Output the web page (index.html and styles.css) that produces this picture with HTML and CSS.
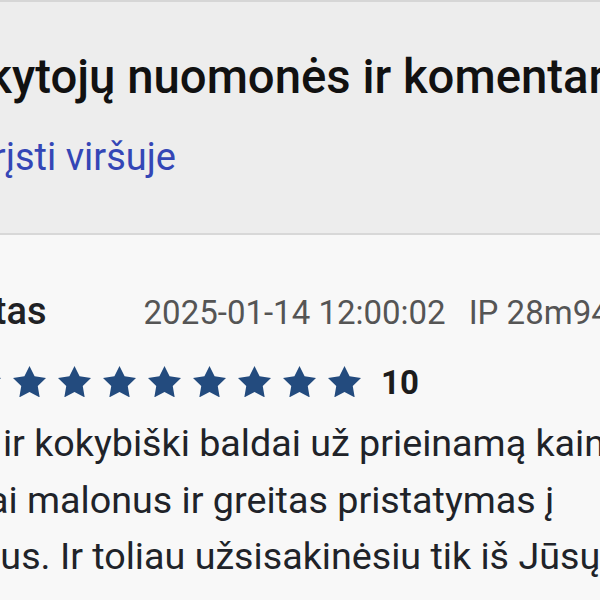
FILE: index.html
```html
<!DOCTYPE html>
<html lang="lt">
<head>
<meta charset="utf-8">
<title>Lankytojų nuomonės ir komentarai</title>
<link rel="stylesheet" href="styles.css">
</head>
<body>
<div class="page">
  <section class="reviews-head">
    <h2 class="title">Lankytojų nuomonės ir komentarai</h2>
    <a class="pin-link" href="#">Sugrįsti viršuje</a>
  </section>
  <article class="review">
    <div class="meta">
      <span class="author">Mantas</span>
      <span class="date">2025-01-14 12:00:02</span>
      <span class="ip">IP 28m94*.***</span>
    </div>
    <div class="rating">
      <span class="stars">
        <svg class="star" viewBox="2 2 20 19.02"><polygon points="12,2 15.09,8.26 22,9.27 17,14.14 18.18,21.02 12,17.77 5.82,21.02 7,14.14 2,9.27 8.91,8.26"/></svg>
        <svg class="star" viewBox="2 2 20 19.02"><polygon points="12,2 15.09,8.26 22,9.27 17,14.14 18.18,21.02 12,17.77 5.82,21.02 7,14.14 2,9.27 8.91,8.26"/></svg>
        <svg class="star" viewBox="2 2 20 19.02"><polygon points="12,2 15.09,8.26 22,9.27 17,14.14 18.18,21.02 12,17.77 5.82,21.02 7,14.14 2,9.27 8.91,8.26"/></svg>
        <svg class="star" viewBox="2 2 20 19.02"><polygon points="12,2 15.09,8.26 22,9.27 17,14.14 18.18,21.02 12,17.77 5.82,21.02 7,14.14 2,9.27 8.91,8.26"/></svg>
        <svg class="star" viewBox="2 2 20 19.02"><polygon points="12,2 15.09,8.26 22,9.27 17,14.14 18.18,21.02 12,17.77 5.82,21.02 7,14.14 2,9.27 8.91,8.26"/></svg>
        <svg class="star" viewBox="2 2 20 19.02"><polygon points="12,2 15.09,8.26 22,9.27 17,14.14 18.18,21.02 12,17.77 5.82,21.02 7,14.14 2,9.27 8.91,8.26"/></svg>
        <svg class="star" viewBox="2 2 20 19.02"><polygon points="12,2 15.09,8.26 22,9.27 17,14.14 18.18,21.02 12,17.77 5.82,21.02 7,14.14 2,9.27 8.91,8.26"/></svg>
        <svg class="star" viewBox="2 2 20 19.02"><polygon points="12,2 15.09,8.26 22,9.27 17,14.14 18.18,21.02 12,17.77 5.82,21.02 7,14.14 2,9.27 8.91,8.26"/></svg>
        <svg class="star" viewBox="2 2 20 19.02"><polygon points="12,2 15.09,8.26 22,9.27 17,14.14 18.18,21.02 12,17.77 5.82,21.02 7,14.14 2,9.27 8.91,8.26"/></svg>
        <svg class="star" viewBox="2 2 20 19.02"><polygon points="12,2 15.09,8.26 22,9.27 17,14.14 18.18,21.02 12,17.77 5.82,21.02 7,14.14 2,9.27 8.91,8.26"/></svg>
      </span>
      <span class="score">10</span>
    </div>
    <p class="text">Geri ir kokybiški baldai už prieinamą kainą. Labai malonus ir greitas pristatymas į namus. Ir toliau užsisakinėsiu tik iš Jūsų.</p>
  </article>
</div>
</body>
</html>
```

FILE: styles.css
```css
html, body {
  margin: 0;
  padding: 0;
  overflow: hidden;
  background: #f8f8f8;
}

body {
  width: 600px;
  height: 600px;
  font-family: Roboto, "Noto Sans", "Liberation Sans", sans-serif;
  color: #202329;
}

.page {
  margin-left: -72px;
  width: 722px;
}

.reviews-head {
  background: #ededed;
  border-top: 2px solid #d6d6d6;
  border-bottom: 2px solid #d8d8d8;
  padding: 48px 0 54px;
}

.title {
  margin: 0 0 0 -18px;
  font-size: 47.3px;
  line-height: 54px;
  font-weight: 500;
  color: #111111;
  white-space: nowrap;
}

.pin-link {
  display: block;
  margin-top: 31px;
  font-size: 38px;
  line-height: 44px;
  color: #3446b6;
  text-decoration: none;
  white-space: nowrap;
}

.review {
  padding-top: 54px;
}

.meta {
  display: flex;
  align-items: baseline;
  line-height: 44px;
  white-space: nowrap;
}

.author {
  margin-left: -9px;
  font-size: 38px;
  font-weight: 500;
  color: #202124;
}

.date {
  margin-left: 97px;
  font-size: 33px;
  color: #555555;
}

.ip {
  margin-left: 23px;
  font-size: 33px;
  color: #555555;
}

.rating {
  display: flex;
  align-items: center;
  gap: 20px;
  margin-top: 28px;
}

.stars {
  display: flex;
  gap: 12px;
  margin-left: -5px;
}

.star {
  display: block;
  width: 33px;
  height: 31.4px;
  fill: #234b7e;
}

.score {
  margin-top: 3px;
  font-size: 33px;
  line-height: 34px;
  font-weight: 700;
  color: #1c1c1c;
}

.text {
  margin: 15px 0 0 -2px;
  font-size: 37.7px;
  line-height: 56.5px;
  color: #202329;
}
```
